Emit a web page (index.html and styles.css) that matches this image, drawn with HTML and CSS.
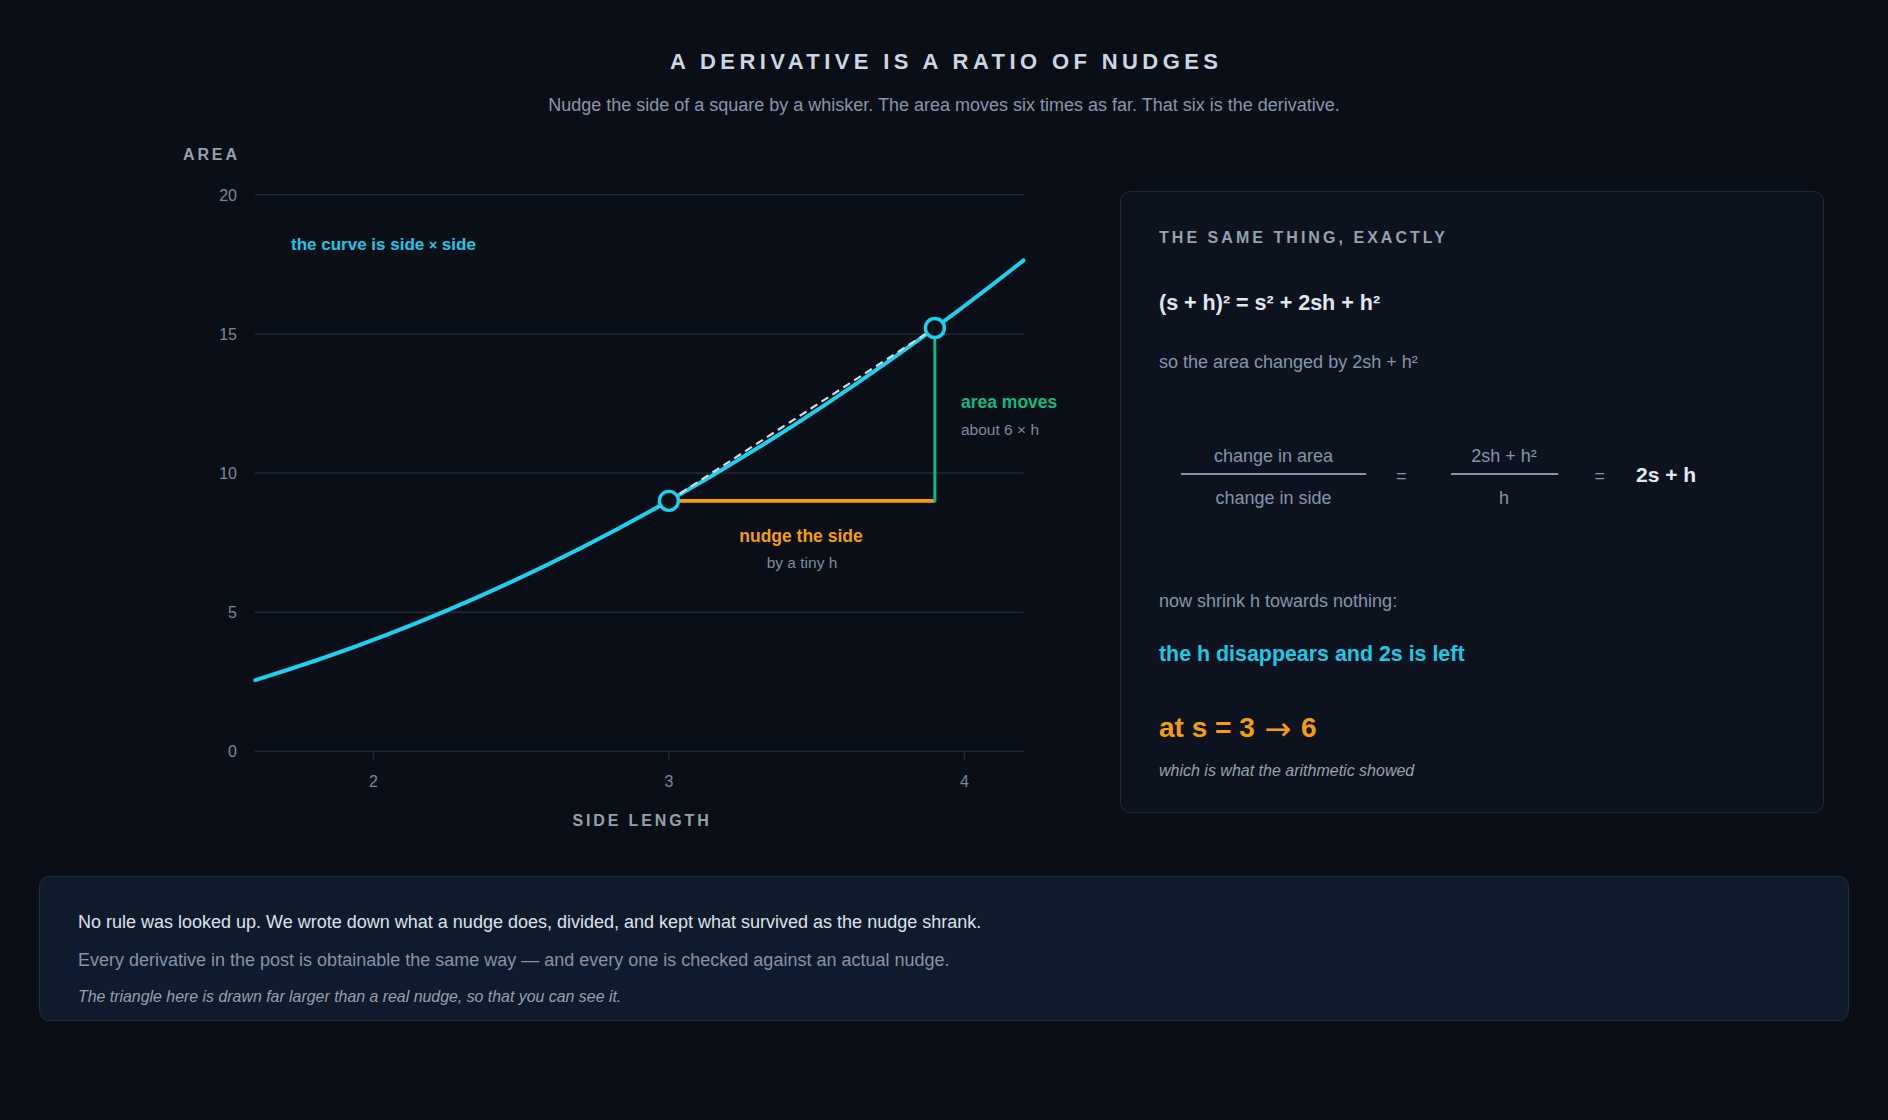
FILE: index.html
```html
<!DOCTYPE html>
<html lang="en">
<head>
<meta charset="utf-8">
<title>A derivative is a ratio of nudges</title>
<link rel="stylesheet" href="styles.css">
</head>
<body>
<div class="page">
  <header class="head">
    <h1 class="title">A DERIVATIVE IS A RATIO OF NUDGES</h1>
    <p class="subtitle">Nudge the side of a square by a whisker. The area moves six times as far. That six is the derivative.</p>
  </header>

  <main class="main">
    <svg class="chart" width="1081" height="700" viewBox="39 140 1081 700" xmlns="http://www.w3.org/2000/svg">
      <text class="axis-title" x="183" y="160">AREA</text>

      <g class="grid">
        <line x1="255" y1="194.7" x2="1023.5" y2="194.7"/>
        <line x1="255" y1="333.9" x2="1023.5" y2="333.9"/>
        <line x1="255" y1="473.0" x2="1023.5" y2="473.0"/>
        <line x1="255" y1="612.2" x2="1023.5" y2="612.2"/>
        <line x1="255" y1="751.3" x2="1023.5" y2="751.3"/>
        <line x1="373.4" y1="751.3" x2="373.4" y2="760"/>
        <line x1="668.9" y1="751.3" x2="668.9" y2="760"/>
        <line x1="964.4" y1="751.3" x2="964.4" y2="760"/>
      </g>

      <g class="tick">
        <text x="237" y="200.5" text-anchor="end">20</text>
        <text x="237" y="339.6" text-anchor="end">15</text>
        <text x="237" y="478.7" text-anchor="end">10</text>
        <text x="237" y="617.9" text-anchor="end">5</text>
        <text x="237" y="757" text-anchor="end">0</text>
        <text x="373.4" y="787" text-anchor="middle">2</text>
        <text x="668.9" y="787" text-anchor="middle">3</text>
        <text x="964.4" y="787" text-anchor="middle">4</text>
      </g>

      <text class="axis-title" x="642" y="826" text-anchor="middle">SIDE LENGTH</text>

      <path class="curve" d="M255.2,680.06 Q639.35,564.28 1023.5,260.38"/>
      <line class="secant" x1="668.9" y1="500.83" x2="934.85" y2="328.01"/>
      <line class="run" x1="668.9" y1="500.83" x2="934.85" y2="500.83"/>
      <line class="rise" x1="934.85" y1="502.2" x2="934.85" y2="328.01"/>
      <circle class="pt" cx="668.9" cy="500.83" r="9.5"/>
      <circle class="pt" cx="934.85" cy="328.01" r="9.5"/>

      <text class="lbl lbl-cyan" x="291" y="250">the curve is side <tspan class="times">×</tspan> side</text>
      <text class="lbl lbl-green" x="961" y="408">area moves</text>
      <text class="sub" x="961" y="434.5">about 6 × h</text>
      <text class="lbl lbl-orange" x="801" y="542" text-anchor="middle">nudge the side</text>
      <text class="sub" x="802" y="567.5" text-anchor="middle">by a tiny h</text>
    </svg>

    <section class="panel">
      <h2 class="panel-title">THE SAME THING, EXACTLY</h2>
      <p class="expand">(s + h)² = s² + 2sh + h²</p>
      <p class="body">so the area changed by 2sh + h²</p>

      <div class="ratio">
        <div class="frac frac-wide">
          <span class="num">change in area</span>
          <span class="den">change in side</span>
        </div>
        <span class="eq eq-one">=</span>
        <div class="frac frac-narrow">
          <span class="num">2sh + h²</span>
          <span class="den">h</span>
        </div>
        <span class="eq eq-two">=</span>
        <span class="result">2s + h</span>
      </div>

      <p class="body shrink">now shrink h towards nothing:</p>
      <p class="punch">the h disappears and 2s is left</p>
      <p class="answer">at s = 3 <span class="arrow">→</span> 6</p>
      <p class="note">which is what the arithmetic showed</p>
    </section>
  </main>

  <footer class="card">
    <p class="card-lead">No rule was looked up. We wrote down what a nudge does, divided, and kept what survived as the nudge shrank.</p>
    <p class="card-body">Every derivative in the post is obtainable the same way — and every one is checked against an actual nudge.</p>
    <p class="card-note">The triangle here is drawn far larger than a real nudge, so that you can see it.</p>
  </footer>
</div>
</body>
</html>
```
FILE: styles.css
```css
* { box-sizing: border-box; }

html, body {
  margin: 0;
  padding: 0;
  background: #0a0e16;
}

body {
  font-family: "Liberation Sans", Arial, sans-serif;
  color: #cfd8e3;
  width: 1888px;
  height: 1120px;
  overflow: hidden;
}

.page {
  padding: 0 39px;
}

.head {
  text-align: center;
  padding-top: 49px;
}

.title {
  margin: 0;
  font-size: 22px;
  line-height: 26px;
  font-weight: 700;
  letter-spacing: 0.2em;
  color: #cdd6e3;
  padding-left: 0.2em;
}

.subtitle {
  margin: 20px 0 0;
  font-size: 18px;
  line-height: 20px;
  color: #8797ae;
}

.main {
  display: flex;
  align-items: flex-start;
  margin-top: 25px;
}

.chart {
  display: block;
  flex: 0 0 1081px;
  font-family: "Liberation Sans", Arial, sans-serif;
}

.axis-title {
  font-size: 16px;
  font-weight: 700;
  letter-spacing: 0.18em;
  fill: #97a1ac;
}

.grid line {
  stroke: #1e2a3c;
  stroke-width: 1.5;
}

.tick text {
  font-size: 16px;
  fill: #7a889c;
}

.curve {
  fill: none;
  stroke: #1ad2f0;
  stroke-width: 4;
  stroke-linecap: round;
}

.secant {
  stroke: #d4dce6;
  stroke-width: 2.2;
  stroke-dasharray: 8 5;
}

.run {
  stroke: #f59e0b;
  stroke-width: 3.8;
}

.rise {
  stroke: #10b981;
  stroke-width: 3;
}

.pt {
  fill: #0a0e16;
  stroke: #1ad2f0;
  stroke-width: 3.4;
}

.lbl {
  font-size: 17.5px;
  font-weight: 700;
}

.lbl-cyan { fill: #1cc8e6; font-size: 17px; }
.lbl-green { fill: #10b981; }
.lbl-orange { fill: #f59e0b; }

.times { font-size: 14px; }

.sub {
  font-size: 15.5px;
  fill: #7c8aa0;
}

.panel {
  flex: 0 0 704px;
  height: 622px;
  margin-top: 51px;
  padding: 0 38px;
  background: #0c131f;
  border: 1.5px solid #1d293b;
  border-radius: 10px;
}

.panel p { margin: 0; }

.panel-title {
  margin: 34px 0 0;
  font-size: 16px;
  line-height: 24px;
  font-weight: 700;
  letter-spacing: 0.19em;
  color: #97a1ac;
}

.expand {
  margin-top: 40px !important;
  font-size: 21.5px;
  line-height: 26px;
  font-weight: 700;
  color: #e2e8f0;
}

.body {
  font-size: 18px;
  line-height: 24px;
  color: #8595ac;
}

.panel .body { margin-top: 34px; }

.ratio {
  display: flex;
  align-items: center;
  margin: 71px 0 0 22px;
  height: 64px;
}

.frac {
  display: flex;
  flex-direction: column;
  align-items: stretch;
  text-align: center;
  font-size: 18px;
  color: #8595ac;
}

.frac .num {
  line-height: 22px;
  padding-bottom: 6px;
  border-bottom: 2px solid #8595ac;
}

.frac .den {
  line-height: 22px;
  padding-top: 12px;
}

.frac-wide { width: 185px; }
.frac-narrow { width: 107px; }

.eq {
  font-size: 18px;
  color: #8595ac;
  line-height: 22px;
  margin-bottom: 2px;
}

.eq-one { padding: 0 44px 0 30px; }
.eq-two { padding: 0 31px 0 37px; }

.result {
  font-size: 21px;
  font-weight: 700;
  color: #e2e8f0;
  line-height: 26px;
  margin-bottom: 4px;
}

.panel .shrink { margin-top: 80px; }

.punch {
  margin-top: 28px !important;
  font-size: 21.4px;
  line-height: 26px;
  font-weight: 700;
  color: #1cc8e6;
}

.answer {
  margin-top: 44px !important;
  font-size: 28px;
  line-height: 34px;
  font-weight: 700;
  color: #f59e0b;
}

.arrow {
  font-family: "DejaVu Sans", sans-serif;
  font-weight: 400;
  font-size: 32px;
  line-height: 0;
  vertical-align: -3px;
  margin: 0 2px;
}

.note {
  margin-top: 16px !important;
  font-size: 16px;
  line-height: 20px;
  font-style: italic;
  color: #98a1ab;
}

.card {
  margin-top: 36px;
  padding: 33px 38px 0;
  height: 145px;
  background: #0f1a2c;
  border: 1.5px solid #1e2c42;
  border-radius: 10px;
}

.card p { margin: 0; }

.card-lead {
  font-size: 18px;
  line-height: 24px;
  color: #dce3ec;
}

.card-body {
  margin-top: 14px !important;
  font-size: 18px;
  line-height: 24px;
  color: #8494ab;
}

.card-note {
  margin-top: 15px !important;
  font-size: 15.9px;
  line-height: 20px;
  font-style: italic;
  color: #98a1ab;
}
```
